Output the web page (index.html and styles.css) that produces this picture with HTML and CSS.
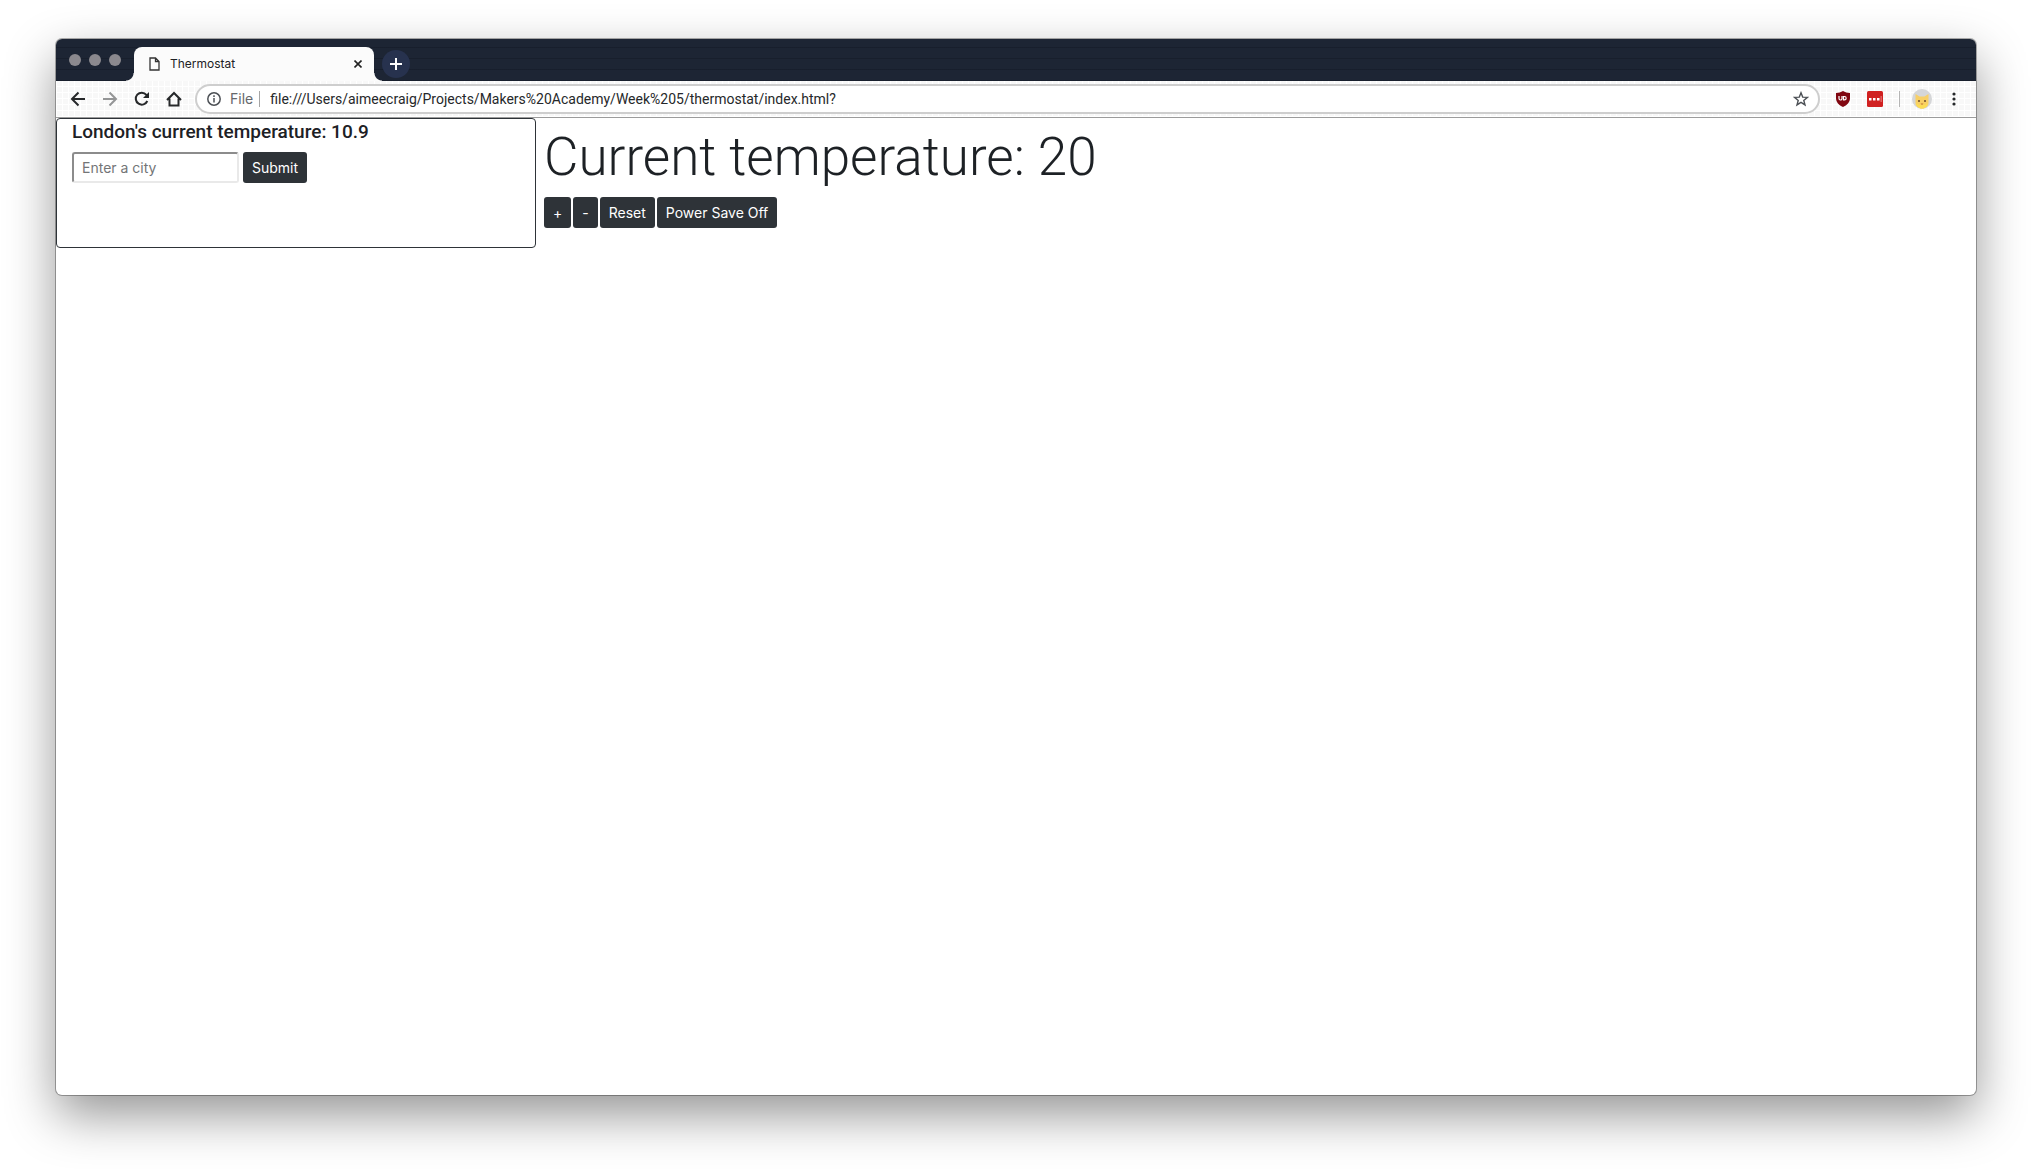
FILE: index.html
```html
<!DOCTYPE html>
<html lang="en">
<head>
<meta charset="utf-8">
<title>Thermostat</title>
<link rel="stylesheet" href="styles.css">
</head>
<body>
<div class="window">
  <header class="tab-strip">
    <div class="lights"><span class="light"></span><span class="light"></span><span class="light"></span></div>
    <div class="tab">
      <svg class="page-icon" width="11" height="14" viewBox="0 0 11 14" fill="none" stroke="#333" stroke-width="1.3"><path d="M1 1h5.5L10 4.500V13H1zM6.500 1v3.500H10"/></svg>
      <span class="tab-title">Thermostat</span>
      <button class="icon-button tab-close" aria-label="Close tab"><svg width="8" height="8" viewBox="0 0 8 8" stroke="#222" stroke-width="1.6"><path d="M.5.5l7 7M7.500.5l-7 7"/></svg></button>
    </div>
    <button class="icon-button new-tab" aria-label="New tab"><svg width="12" height="12" viewBox="0 0 12 12" stroke="#fff" stroke-width="2"><path d="M6 0v12M0 6h12"/></svg></button>
  </header>
  <nav class="toolbar" aria-label="Browser">
    <button class="icon-button nav-button" aria-label="Back"><svg width="16" height="16" viewBox="0 0 16 16" fill="none" stroke="#26282a" stroke-width="2"><path d="M15 8H2.500M8.500 1.500L2 8l6.500 6.500"/></svg></button>
    <button class="icon-button nav-button" aria-label="Forward"><svg width="16" height="16" viewBox="0 0 16 16" fill="none" stroke="#949596" stroke-width="2"><path d="M1 8h12.500M7.500 1.500L14 8l-6.500 6.500"/></svg></button>
    <button class="icon-button nav-button" aria-label="Reload"><svg width="16" height="16" viewBox="0 0 16 16" fill="none" stroke="#26282a" stroke-width="2"><path d="M13.300 10A6 6 0 1 1 12.400 3.800L14 5.500"/><path d="M15 1v6H9z" fill="#26282a" stroke="none"/></svg></button>
    <button class="icon-button nav-button" aria-label="Home"><svg width="16" height="16" viewBox="0 0 16 16" fill="none" stroke="#26282a" stroke-width="2"><path d="M1 9l7-7 7 7M3.500 7.500v7h9v-7"/></svg></button>
    <div class="omnibox">
      <svg width="14" height="14" viewBox="0 0 14 14" fill="none" stroke="#4c5055" stroke-width="1.500"><circle cx="7" cy="7" r="6.200"/><path d="M7 6v4.500M7 3.300v1.700"/></svg>
      <label class="scheme" for="url">File</label>
      <input class="url" id="url" type="text" value="file:///Users/aimeecraig/Projects/Makers%20Academy/Week%205/thermostat/index.html?">
      <button class="icon-button" aria-label="Bookmark this page"><svg width="16" height="16" viewBox="0 0 16 16" fill="none" stroke="#4c5055" stroke-width="1.400"><path d="M8 1.800l1.700 4.300 4.700.3-3.600 3 1.200 4.500L8 11.400l-4 2.500 1.200-4.500-3.600-3 4.700-.3z"/></svg></button>
    </div>
    <div class="extensions">
      <button class="icon-button" aria-label="Content blocker"><svg width="16" height="16" viewBox="0 0 16 16" fill="none"><path d="M8 0c2 1.300 4.500 2 7 2v5c0 4.500-3 7-7 9-4-2-7-4.500-7-9V2c2.500 0 5-.7 7-2z" fill="#800610"/><path d="M4 5v2.500a1.500 1.500 0 0 0 3 0V5M8.500 5.500h1a1.600 1.600 0 0 1 0 3.300h-1z" stroke="#fff" stroke-width="1.200"/></svg></button>
      <button class="icon-button" aria-label="Password manager"><svg width="16" height="16" viewBox="0 0 16 16"><rect width="16" height="16" rx="1.500" fill="#d02020"/><path d="M2 7h2.500v2.500H2zM6 7h2.500v2.500H6zM10 7h2.500v2.500H10z" fill="#fff"/><path d="M13.700 5h.8v6h-.8z" fill="#eda0a0"/></svg></button>
    </div>
    <button class="icon-button profile" aria-label="Profile"><svg width="20" height="20" viewBox="0 0 20 20"><circle cx="10" cy="10" r="10" fill="#d5d6d8"/><path d="M3.500 5l4 2.500h5l4-2.500v9c0 3-3 5.500-6.500 5.500S3.500 17 3.500 14z" fill="#f8cf65"/><path d="M4 14c4 3 8 3 12 0-.5 3.500-3 5.500-6 5.500S4.500 17.500 4 14z" fill="#fbdc55"/><circle cx="7" cy="12" r="1" fill="#6b4a2b"/><circle cx="13" cy="12" r="1" fill="#6b4a2b"/><path d="M8.500 14.500h3L10 16z" fill="#bd762e"/></svg></button>
    <button class="icon-button menu" aria-label="Menu"><svg width="4" height="14" viewBox="0 0 4 14" fill="#26282a"><circle cx="2" cy="2" r="1.600"/><circle cx="2" cy="7" r="1.600"/><circle cx="2" cy="12" r="1.600"/></svg></button>
  </nav>
  <main class="page">
    <section class="weather">
      <h2 class="weather-title">London's current temperature: 10.9</h2>
      <form class="city-form">
        <input class="city" type="text" placeholder="Enter a city" aria-label="City">
        <button class="btn" type="submit">Submit</button>
      </form>
    </section>
    <section class="thermostat">
      <h1 class="display">Current temperature: 20</h1>
      <div class="controls">
        <button class="btn">+</button>
        <button class="btn">-</button>
        <button class="btn">Reset</button>
        <button class="btn">Power Save Off</button>
      </div>
    </section>
  </main>
</div>
</body>
</html>
```
FILE: styles.css
```css
* { box-sizing: border-box; }

body {
  margin: 0;
  padding: 39px 56px 74px;
  background: #fff;
  color: #1d2125;
  font: 14px/21px Inter, "Liberation Sans", sans-serif;
}

h1, h2 { margin: 0; font-family: Roboto, "Liberation Sans", sans-serif; }

button, input { font: inherit; }

svg { display: block; flex: none; }

.window {
  display: flex;
  flex-direction: column;
  min-height: calc(100vh - 113px);
  border-radius: 6px;
  background: #fff;
  box-shadow: 0 0 0 1px rgba(0, 0, 0, .3), 0 20px 50px rgba(0, 0, 0, .42);
}

/* Tab strip */
.tab-strip {
  display: flex;
  align-items: flex-end;
  height: 42px;
  padding-left: 13px;
  border-radius: 6px 6px 0 0;
  background:
    repeating-linear-gradient(0deg, rgba(8, 12, 22, .25) 0 1px, transparent 1px 11px),
    #1d2534;
}

.lights { display: flex; gap: 8px; width: 65px; padding-bottom: 15px; }
.light { width: 12px; height: 12px; border-radius: 50%; background: #8b898e; }

.tab {
  position: relative;
  display: flex;
  align-items: center;
  width: 240px;
  height: 34px;
  padding: 0 12px 0 15px;
  border-radius: 8px 8px 0 0;
  background: #fbfbfb;
}

/* Curved feet that join the tab to the toolbar */
.tab::before,
.tab::after {
  content: "";
  position: absolute;
  bottom: 0;
  width: 8px;
  height: 8px;
}

.tab::before {
  right: 100%;
  background: radial-gradient(circle at 0 0, transparent 7px, #fbfbfb 8px);
}

.tab::after {
  left: 100%;
  background: radial-gradient(circle at 100% 0, transparent 7px, #fbfbfb 8px);
}

.tab-title { flex: 1; margin-left: 10px; font-size: 12px; line-height: 16px; }

.icon-button {
  display: flex;
  align-items: center;
  justify-content: center;
  padding: 0;
  border: 0;
  background: none;
}

.new-tab {
  width: 28px;
  height: 28px;
  margin: 0 8px 3px;
  border-radius: 50%;
  background: #27324e;
}

/* Toolbar */
.toolbar {
  display: flex;
  align-items: center;
  height: 37px;
  padding: 0 12px 0 6px;
  border-bottom: 1px solid #9c9c9c;
  background:
    repeating-linear-gradient(0deg, #fff 0 1px, transparent 1px 6px),
    repeating-linear-gradient(90deg, #fff 0 1px, transparent 1px 6px),
    #f8f8f8;
}

.nav-button { width: 32px; height: 32px; }

.omnibox {
  display: flex;
  align-items: center;
  flex: 1;
  height: 30px;
  margin-left: 5px;
  padding: 0 9px 0 10px;
  border: 2px solid #cecece;
  border-radius: 15px;
  background: #fff;
}

.scheme {
  margin-left: 9px;
  padding-right: 6px;
  border-right: 1px solid #a5a5a5;
  color: #65686c;
  line-height: 16px;
}

.url {
  flex: 1;
  min-width: 0;
  padding: 0 0 0 10px;
  border: 0;
  background: none;
  color: #26282a;
  font-family: Roboto, "Liberation Sans", sans-serif;
}

.extensions {
  display: flex;
  gap: 16px;
  margin-left: 15px;
  padding-right: 16px;
  border-right: 1px solid #b5b5b5;
}

.profile { margin: 0 12px; }
.menu { width: 20px; height: 20px; }

/* Thermostat page */
.page { display: flex; }

.weather {
  flex: 0 0 25%;
  min-height: 130px;
  padding: 0 15px;
  border: 1px solid #2e3338;
  border-radius: 4px;
}

.weather-title { margin-bottom: 8px; font-size: 19px; font-weight: 500; line-height: 25px; }

.city-form { display: flex; gap: 4px; }

.city {
  width: 167px;
  height: 31px;
  padding: 4px 8px;
  border: 2px solid;
  border-color: #8c8c8c #e9e9e9 #e9e9e9 #8c8c8c;
  border-radius: 3px;
  background: #fff;
}

.city::placeholder { color: #737577; opacity: 1; }

.thermostat { flex: 1; padding: 4px 8px; }

.display { margin-bottom: 4px; font-size: 53px; font-weight: 300; line-height: 71px; }

.controls { display: flex; gap: 2px; }

.btn {
  height: 31px;
  padding: 4px 9px;
  border: 0;
  border-radius: 3px;
  background: #2e3338;
  color: #fff;
}
```
